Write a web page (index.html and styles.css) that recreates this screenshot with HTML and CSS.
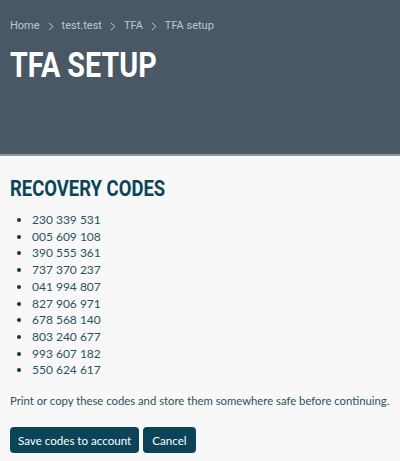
FILE: index.html
```html
<!DOCTYPE html>
<html lang="en">

<head>
    <meta charset="UTF-8">
    <meta name="viewport" content="width=device-width, initial-scale=1.0">
    <title>TFA setup</title>
    <link rel="stylesheet" href="styles.css">
</head>

<body>
    <header class="hero">
        <nav class="crumbs">
            <a href="#">Home</a>
            <svg class="sep" width="6" height="9" viewBox="0 0 6 9"><polyline points="1,1 5,4.5 1,8" /></svg>
            <a href="#">test.test</a>
            <svg class="sep" width="6" height="9" viewBox="0 0 6 9"><polyline points="1,1 5,4.5 1,8" /></svg>
            <a href="#">TFA</a>
            <svg class="sep" width="6" height="9" viewBox="0 0 6 9"><polyline points="1,1 5,4.5 1,8" /></svg>
            <span>TFA setup</span>
        </nav>
        <h1 class="title"><span class="narrow">TFA SETUP</span></h1>
    </header>
    <main class="content">
        <h2 class="subtitle"><span class="narrow">RECOVERY CODES</span></h2>
        <ul class="codes">
            <li>230 339 531</li>
            <li>005 609 108</li>
            <li>390 555 361</li>
            <li>737 370 237</li>
            <li>041 994 807</li>
            <li>827 906 971</li>
            <li>678 568 140</li>
            <li>803 240 677</li>
            <li>993 607 182</li>
            <li>550 624 617</li>
        </ul>
        <p class="note">Print or copy these codes and store them somewhere safe before continuing.</p>
        <div class="actions">
            <button class="btn">Save codes to account</button>
            <button class="btn btn-cancel">Cancel</button>
        </div>
    </main>
</body>

</html>
```

FILE: styles.css
```css
body {
    margin: 0;
    padding: 0;
    background: #f8f8f8;
    font-family: Lato, Roboto, sans-serif;
    font-size: 12.5px;
    color: #29525f;
}

.hero {
    background: #4a5866;
    height: 154px;
    border-bottom: 2px solid #8b959d;
    padding: 0 10px;
}

.crumbs {
    padding-top: 17px;
    display: flex;
    align-items: center;
    gap: 8px;
    color: #b5c9d4;
    font-family: Roboto, sans-serif;
    font-size: 11px;
    line-height: 18px;
}

.crumbs a {
    color: #b5c9d4;
    text-decoration: none;
}

.sep {
    fill: none;
    stroke: #b5c9d4;
    stroke-width: 1;
}

.narrow {
    display: inline-block;
    transform: scaleX(0.82);
    transform-origin: left center;
}

.title {
    margin: 11px 0 0;
    color: #ffffff;
    font-family: Roboto, sans-serif;
    font-weight: bold;
    font-size: 35px;
    line-height: 40px;
}

.content {
    padding: 18px 10px 0;
}

.subtitle {
    margin: 0;
    color: #0b4459;
    font-family: Roboto, sans-serif;
    font-weight: bold;
    font-size: 22.5px;
    line-height: 28px;
}

.codes {
    margin: 10px 0 0;
    padding-left: 22px;
    font-size: 12px;
    line-height: 16.7px;
}

.codes li::marker {
    color: #0b3a4a;
}

.note {
    margin: 13px 0 0;
    font-size: 11.3px;
    line-height: 18px;
    white-space: nowrap;
}

.actions {
    margin-top: 17px;
    display: flex;
    gap: 4px;
}

.btn {
    background: #0b4459;
    color: #ffffff;
    border: none;
    border-radius: 4px;
    height: 26px;
    padding: 0 8px;
    font-family: inherit;
    font-size: 11.6px;
}

.btn-cancel {
    padding: 0 9px;
}
```
